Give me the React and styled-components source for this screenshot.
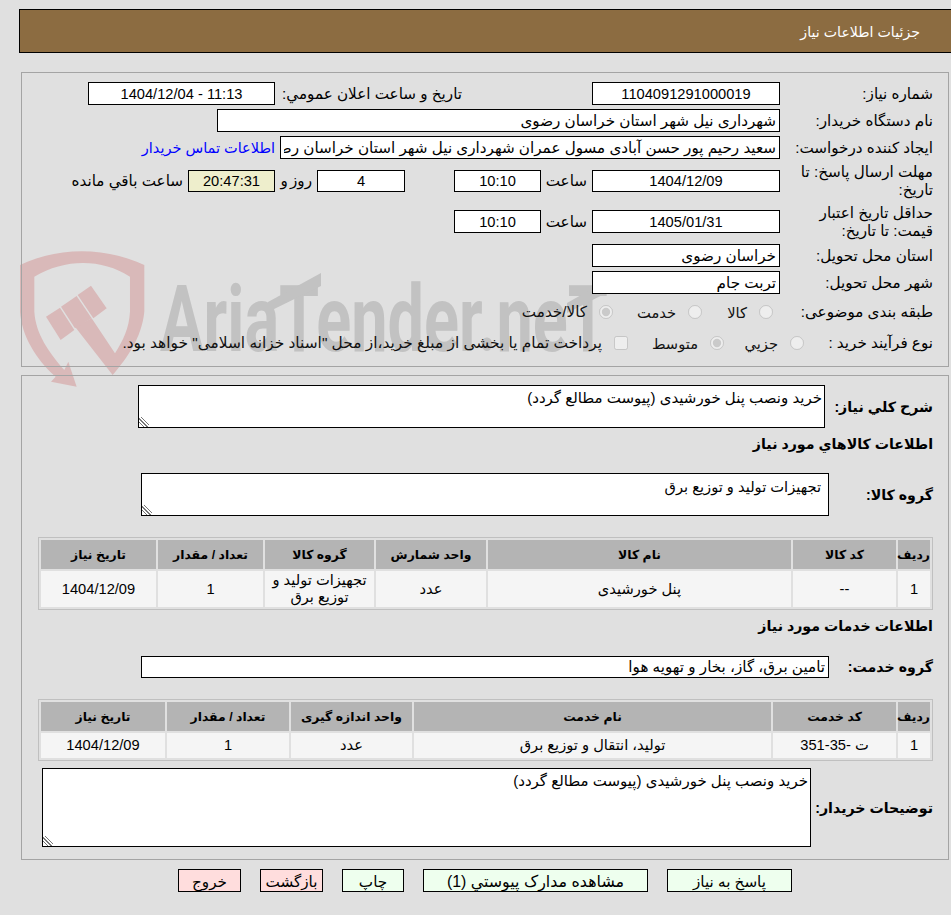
import React from "react";
import styled, { createGlobalStyle } from "styled-components";

const GlobalStyle = createGlobalStyle`
  html {
    background: #e0e0e0;
  }
  body {
    margin: 0;
    overflow: hidden;
    color: #000;
    font: 15.2px "Liberation Sans", "DejaVu Sans", sans-serif;
  }
`;

const Page = styled.div`
  position: relative;
  direction: rtl;
  height: 915px;
  overflow: hidden;
`;

const Watermark = styled.svg`
  position: absolute;
  left: 0;
  top: 240px;
  z-index: -1;
`;

const Header = styled.div`
  display: flex;
  align-items: center;
  box-sizing: border-box;
  height: 44px;
  margin: 9px -1px 0 19px;
  padding: 2px 31px 0 0;
  background: #8c6c41;
  border: 1px solid #000;
  color: #fff;
  font-size: 14.2px;
`;

const Panel = styled.div`
  box-sizing: border-box;
  height: ${props => props.$height}px;
  margin: ${props => props.$top}px 2px 0 21px;
  padding: 9px 15px 0 0;
  border: 1px solid #a4a4a4;
`;

const Row = styled.div`
  display: flex;
  align-items: center;
  height: ${props => props.$height || 23}px;
  margin-top: ${props => props.$top || 0}px;
  margin-bottom: ${props => (props.$top === undefined ? 4 : 0)}px;
`;

const Label = styled.div`
  flex: none;
  width: ${props => props.$width || 153}px;
  margin-right: ${props => props.$inset || 0}px;
  line-height: 18px;
  white-space: nowrap;
  font-size: ${props => (props.$bold ? "14.2px" : "inherit")};
  font-weight: ${props => (props.$bold ? 700 : 400)};
`;

const Field = styled.input`
  flex: none;
  box-sizing: border-box;
  width: ${props => props.$width}px;
  height: ${props => props.$height || 23}px;
  margin: 0 ${props => props.$inset || 0}px 0 0;
  padding: 0 3px;
  background: ${props => props.$bg || "#fff"};
  border: 1px solid #000;
  border-radius: 0;
  outline: none;
  color: #000;
  font: inherit;
  font-size: ${props => (props.$center ? "14.67px" : "inherit")};
  text-align: ${props => (props.$center ? "center" : "right")};
`;

const Note = styled.textarea`
  flex: none;
  box-sizing: border-box;
  display: block;
  width: ${props => props.$width}px;
  height: ${props => props.$height}px;
  margin: 0;
  padding: ${props => (props.$roomy ? "4px 7px 0 0" : "3px 2px 0 0")};
  background: #fff;
  border: 1px solid #000;
  border-radius: 0;
  outline: none;
  color: #000;
  font: inherit;
  font-size: ${props => (props.$roomy ? "14.67px" : "15px")};

  &::-webkit-resizer {
    background: linear-gradient(
        45deg,
        transparent 0 3px,
        #777 3px 4px,
        transparent 4px 5.5px,
        #777 5.5px 6.5px,
        transparent 6.5px 8px,
        #777 8px 9px,
        transparent 9px
      )
      left bottom / 10px 10px no-repeat;
  }
`;

const Unit = styled.span`
  flex: none;
  width: ${props => props.$width}px;
  margin-right: 5px;
  word-spacing: ${props => (props.$tight ? "-2px" : "0")};
`;

const ContactLink = styled.a`
  margin-right: 5px;
  color: #0000ff;
  font-size: 14.5px;
  text-decoration: none;
  white-space: nowrap;
`;

const Option = styled.label`
  display: flex;
  align-items: center;
  flex: none;
  width: ${props => props.$width}px;
  white-space: nowrap;
  color: #111;
  font-size: ${props => props.$size || 14.67}px;
`;

const Radio = styled.input`
  flex: none;
  width: 14px;
  height: 14px;
  margin: 0 0 0 12px;
`;

const Heading = styled.div`
  display: flex;
  align-items: center;
  height: 32px;
  font-size: 14.2px;
  font-weight: 700;
`;

const Table = styled.table`
  box-sizing: border-box;
  width: 895px;
  margin-top: 21px;
  table-layout: fixed;
  border-collapse: separate;
  border-spacing: 2px;
  border: 1px solid #c0c0c0;
`;

const Col = styled.col`
  width: ${props => props.$width}px;
`;

const HeadCell = styled.th`
  height: 29px;
  padding: 0;
  background: #b4b4b4;
  font-size: 12.4px;
  font-weight: 700;
`;

const Cell = styled.td`
  height: ${props => props.$height}px;
  padding: 0;
  background: #f5f5f5;
  font-size: 14.67px;
  line-height: 17px;
  text-align: center;
`;

const Footer = styled.div`
  display: flex;
  gap: 19px;
  margin-top: 9px;
  padding-right: 159px;
`;

const Action = styled.button`
  box-sizing: border-box;
  width: ${props => props.$width}px;
  height: 23px;
  padding: 2px 0 0;
  background: ${props => (props.$danger ? "#ffdddd" : "#eeffee")};
  border: 1px solid #000;
  border-radius: 0;
  color: #000;
  font: inherit;
  font-size: ${props => props.$size || 15.2}px;
`;

const goodsColumns = [32, 103, 303, 110, 109, 105, 115];
const serviceColumns = [32, 123, 357, 121, 122, 124];

const GridTable = ({ columns, heads, cells, rowHeight }) => (
  <Table>
    <colgroup>
      {columns.map((width, i) => (
        <Col key={i} $width={width} />
      ))}
    </colgroup>
    <thead>
      <tr>
        {heads.map(head => (
          <HeadCell key={head}>{head}</HeadCell>
        ))}
      </tr>
    </thead>
    <tbody>
      <tr>
        {cells.map((cell, i) => (
          <Cell key={i} $height={rowHeight}>
            {cell}
          </Cell>
        ))}
      </tr>
    </tbody>
  </Table>
);

const Logo = () => (
  <Watermark width="640" height="160" viewBox="0 0 640 160">
    <g transform="translate(15 5) scale(0.3333)">
      <path
        fill="#d9b9b9"
        d="M15 60C130 5 270 5 388 60L388 200C380 280 335 340 293 390L180 245L230 220L300 325C325 285 342 250 345 200L345 95C260 40 150 40 58 95L58 200C62 265 100 320 148 375L160 350L185 425L108 410L122 395C60 340 20 270 15 200Z"
      />
      <path fill="#d9b9b9" d="M93 215L135 188L178 255L137 285Z" />
      <path fill="#d9b9b9" d="M138 185L185 153L230 220L180 250Z" />
      <path fill="#d9b9b9" d="M188 150L228 122L275 190L235 220Z" />
    </g>
    <text
      x="160"
      y="111"
      fill="#c2c2c2"
      fontFamily="Roboto, sans-serif"
      fontWeight="700"
      fontSize="92"
      textLength="448"
      lengthAdjust="spacingAndGlyphs"
      direction="ltr"
    >
      AriaTender.neT
    </text>
    <path fill="#c2c2c2" d="M268 62L321 33L321 46L268 72Z" />
    <path fill="#c2c2c2" d="M567 63L620 33L620 46L567 73Z" />
  </Watermark>
);

const App = () => (
  <Page>
    <GlobalStyle />
    <Logo />
    <Header>جزئیات اطلاعات نیاز</Header>

    <Panel $top={19} $height={295}>
      <Row>
        <Label>شماره نیاز:</Label>
        <Field readOnly $width={188} $center value="1104091291000019" />
        <Label $width={182} $inset={130}>
          تاریخ و ساعت اعلان عمومي:
        </Label>
        <Field readOnly $width={187} $inset={5} $center value="11:13 - 1404/12/04" />
      </Row>
      <Row>
        <Label>نام دستگاه خریدار:</Label>
        <Field readOnly $width={563} value="شهرداری نیل شهر استان خراسان رضوی" />
      </Row>
      <Row>
        <Label>ایجاد کننده درخواست:</Label>
        <Field
          readOnly
          $width={500}
          value="سعید رحیم پور حسن آبادی مسول عمران شهرداری نیل شهر استان خراسان رضوی"
        />
        <ContactLink href="#">اطلاعات تماس خریدار</ContactLink>
      </Row>
      <Row $height={36}>
        <Label>
          مهلت ارسال پاسخ: تا
          <br />
          تاریخ:
        </Label>
        <Field readOnly $width={188} $height={22} $center value="1404/12/09" />
        <Unit $width={41}>ساعت</Unit>
        <Field readOnly $width={87} $height={22} $inset={5} $center value="10:10" />
        <Field readOnly $width={88} $height={22} $inset={49} $center value="4" />
        <Unit $width={37} $tight>
          روز و
        </Unit>
        <Field readOnly $width={87} $height={22} $center $bg="#eeeecc" value="20:47:31" />
        <Unit $width={120}>ساعت باقي مانده</Unit>
      </Row>
      <Row $height={37}>
        <Label>
          حداقل تاریخ اعتبار
          <br />
          قیمت: تا تاریخ:
        </Label>
        <Field readOnly $width={188} $center value="1405/01/31" />
        <Unit $width={41}>ساعت</Unit>
        <Field readOnly $width={87} $inset={5} $center value="10:10" />
      </Row>
      <Row>
        <Label>استان محل تحویل:</Label>
        <Field readOnly $width={188} value="خراسان رضوی" />
      </Row>
      <Row>
        <Label>شهر محل تحویل:</Label>
        <Field readOnly $width={188} value="تربت جام" />
      </Row>
      <Row $height={28} $top={0}>
        <Label $width={160}>طبقه بندی موضوعی:</Label>
        <Option $width={71}>
          <Radio type="radio" name="category" disabled />
          کالا
        </Option>
        <Option $width={89}>
          <Radio type="radio" name="category" disabled />
          خدمت
        </Option>
        <Option $width={120} $size={15.2}>
          <Radio type="radio" name="category" disabled defaultChecked />
          کالا/خدمت
        </Option>
      </Row>
      <Row $height={26} $top={4}>
        <Label $width={129}>نوع فرآیند خرید :</Label>
        <Option $width={80}>
          <Radio type="radio" name="process" disabled />
          جزیي
        </Option>
        <Option $width={96}>
          <Radio type="radio" name="process" disabled defaultChecked />
          متوسط
        </Option>
        <Option $width={500} $size={15.4}>
          <Radio type="checkbox" disabled />
          پرداخت تمام یا بخشی از مبلغ خرید،از محل "اسناد خزانه اسلامی" خواهد بود.
        </Option>
      </Row>
    </Panel>

    <Panel $top={8} $height={485}>
      <Row $height={43} $top={0}>
        <Label $bold $width={108}>
          شرح کلي نیاز:
        </Label>
        <Note readOnly $width={687} $height={43} defaultValue="خرید ونصب پنل خورشیدی (پیوست مطالع گردد)" />
      </Row>
      <Heading>اطلاعات کالاهاي مورد نیاز</Heading>
      <Row $height={43} $top={13}>
        <Label $bold $width={104}>
          گروه کالا:
        </Label>
        <Note readOnly $roomy $width={688} $height={43} defaultValue="تجهیزات تولید و توزیع برق" />
      </Row>
      <GridTable
        columns={goodsColumns}
        rowHeight={36}
        heads={["ردیف", "کد کالا", "نام کالا", "واحد شمارش", "گروه کالا", "تعداد / مقدار", "تاریخ نیاز"]}
        cells={["1", "--", "پنل خورشیدی", "عدد", "تجهیزات تولید و توزیع برق", "1", "1404/12/09"]}
      />
      <Heading>اطلاعات خدمات مورد نیاز</Heading>
      <Row $height={22} $top={14}>
        <Label $bold $width={104}>
          گروه خدمت:
        </Label>
        <Field readOnly $width={688} $height={22} value="تامین برق، گاز، بخار و تهویه هوا" />
      </Row>
      <GridTable
        columns={serviceColumns}
        rowHeight={25}
        heads={["ردیف", "کد خدمت", "نام خدمت", "واحد اندازه گیری", "تعداد / مقدار", "تاریخ نیاز"]}
        cells={[
          "1",
          <>
            ت <bdi dir="ltr">351-35-</bdi>
          </>,
          "تولید، انتقال و توزیع برق",
          "عدد",
          "1",
          "1404/12/09",
        ]}
      />
      <Row $height={79} $top={7}>
        <Label $bold $width={122}>
          توضیحات خریدار:
        </Label>
        <Note readOnly $width={769} $height={79} defaultValue="خرید ونصب پنل خورشیدی (پیوست مطالع گردد)" />
      </Row>
    </Panel>

    <Footer>
      <Action $width={125}>پاسخ به نیاز</Action>
      <Action $width={225} $size={15.9}>
        مشاهده مدارک پیوستي (1)
      </Action>
      <Action $width={62}>چاپ</Action>
      <Action $width={63} $danger>
        بازگشت
      </Action>
      <Action $width={63} $danger>
        خروج
      </Action>
    </Footer>
  </Page>
);

export default App;
